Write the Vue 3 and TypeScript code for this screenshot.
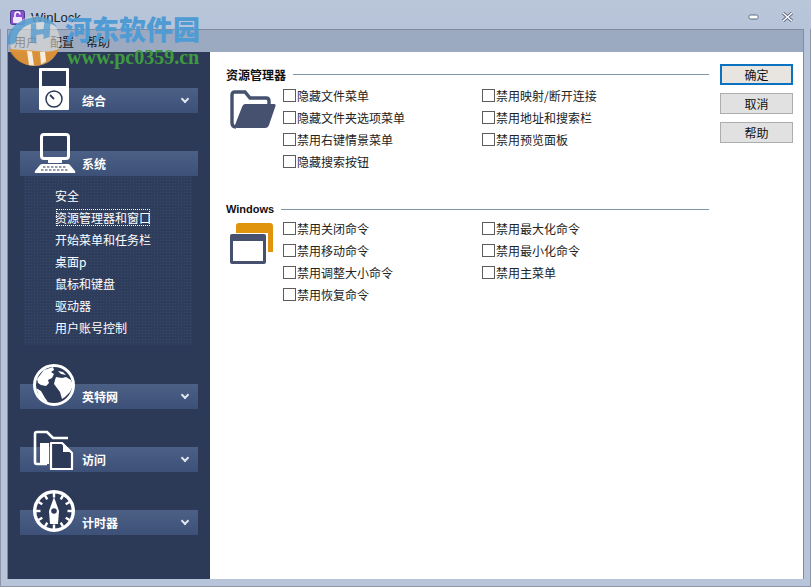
<script setup lang="ts">
interface Section { title: string; cls: string; expanded?: boolean }
const menus: string[] = ['用户', '配置', '帮助']
const sysItems: string[] = ['安全', '资源管理器和窗口', '开始菜单和任务栏', '桌面p', '鼠标和键盘', '驱动器', '用户账号控制']
const explorerA: string[] = ['隐藏文件菜单', '隐藏文件夹选项菜单', '禁用右键情景菜单', '隐藏搜索按钮']
const explorerB: string[] = ['禁用映射/断开连接', '禁用地址和搜索栏', '禁用预览面板']
const winA: string[] = ['禁用关闭命令', '禁用移动命令', '禁用调整大小命令', '禁用恢复命令']
const winB: string[] = ['禁用最大化命令', '禁用最小化命令', '禁用主菜单']
const lowerSections: Section[] = [
  { title: '英特网', cls: 'globe' },
  { title: '访问', cls: 'files' },
  { title: '计时器', cls: 'compass' },
]
const ticks: number[] = [30, 60, 90, 120, 150, 180, 210, 240, 270, 300, 330, 0]
</script>

<template>
  <div class="window">
    <header class="titlebar">
      <svg class="app-icon" width="15" height="15" viewBox="0 0 15 15">
        <rect x="0.5" y="0.5" width="14" height="14" rx="2" fill="#8b4fd0" stroke="#4a3a8a" />
        <rect x="3" y="7" width="9" height="6" rx="1" fill="#efe6fb" />
        <path d="M5 7V4.500a2.500 2.500 0 0 1 5 0" fill="none" stroke="#fff" stroke-width="1.500" />
      </svg>
      <span class="app-title">WinLock</span>
      <span class="spacer"></span>
      <svg class="win-btn" width="12" height="8" viewBox="0 0 12 8">
        <rect x="1" y="2" width="9" height="4" rx="1.500" fill="#fff" stroke="#5d6a84" />
      </svg>
      <svg class="win-btn close" width="13" height="10" viewBox="0 0 13 10">
        <path d="M2 1l9 8M11 1l-9 8" stroke="#5d6a84" stroke-width="3.200" />
        <path d="M2 1l9 8M11 1l-9 8" stroke="#fff" stroke-width="1.400" />
      </svg>
    </header>

    <div class="frame">
      <nav class="menubar">
        <span v-for="m in menus" :key="m" class="menu">{{ m }}</span>
      </nav>

      <div class="body">
        <aside class="sidebar">
          <section class="sec first">
            <svg class="sec-icon ipod" width="30" height="42" viewBox="0 0 30 42">
              <rect width="30" height="42" rx="1" fill="#fff" />
              <rect x="3" y="3" width="24" height="15" fill="#2c3a58" />
              <circle cx="15" cy="31" r="8" fill="none" stroke="#2c3a58" stroke-width="1.500" />
              <path d="M15 31l-4-4" stroke="#2c3a58" stroke-width="1.800" />
            </svg>
            <div class="banner"><span class="banner-text">综合</span><span class="chev"></span></div>
          </section>

          <section class="sec second">
            <svg class="sec-icon computer" width="42" height="41" viewBox="0 0 42 41">
              <rect x="7.500" y="1.500" width="27" height="24" rx="2.500" fill="none" stroke="#fff" stroke-width="3" />
              <rect x="14" y="27" width="14" height="3" fill="#fff" />
              <path d="M8 31h26q1 0 2 1l5 6q1 2-1 2H2q-2 0-1-2l5-6q1-1 2-1z" fill="#fff" />
              <path d="M9 34h24M7 37h28" stroke="#2c3a58" stroke-width="1.200" stroke-dasharray="2.500 1.500" />
            </svg>
            <div class="banner"><span class="banner-text">系统</span></div>
            <ul class="sublist">
              <li v-for="(it, i) in sysItems" :key="it"><span :class="{ focused: i === 1 }">{{ it }}</span></li>
            </ul>
          </section>

          <section v-for="s in lowerSections" :key="s.title" class="sec lower">
            <svg v-if="s.cls === 'globe'" class="sec-icon low-icon" width="42" height="42" viewBox="0 0 42 42">
              <circle cx="21" cy="21" r="19.500" fill="#2c3a58" stroke="#fff" stroke-width="3" />
              <path d="M4 15L11 6l9-3 1 3-3 2 3 2-2 4-4 2 1 3-3 3-5-1-3-2z" fill="#fff" />
              <path d="M23 13l6 1 4-1 5 3 2 6-3 6-5 5-3 2-2-7-3-4-3-4 1-4z" fill="#fff" />
              <path d="M25 7l5 1 3 3-5-1zM3 24l5 3 4 7 3 4-3-1-6-5z" fill="#fff" />
            </svg>
            <svg v-else-if="s.cls === 'files'" class="sec-icon low-icon files-icon" width="42" height="40" viewBox="0 0 42 40">
              <path d="M14 34H4q-2 0-2-2V4q0-2 2-2h10l6 6h15" fill="none" stroke="#fff" stroke-width="2.600" />
              <rect x="7" y="13" width="9" height="21" fill="#fff" />
              <path d="M18 13h11l10 10v16H18z" fill="#2c3a58" stroke="#fff" stroke-width="2.200" stroke-linejoin="round" />
              <path d="M30 13v9h9z" fill="#fff" />
            </svg>
            <svg v-else class="sec-icon low-icon" width="42" height="42" viewBox="0 0 42 42">
              <circle cx="21" cy="21" r="19.300" fill="#2c3a58" stroke="#fff" stroke-width="3.400" />
              <path
                v-for="t in ticks"
                :key="t"
                d="M21 3v4.500"
                stroke="#fff"
                stroke-width="2.400"
                :transform="`rotate(${t} 21 21)`"
              />
              <path d="M21 7l5 14-1 13h-8l-1-13z" fill="#fff" />
              <circle cx="21" cy="21" r="2.800" fill="#2c3a58" />
            </svg>
            <div class="banner"><span class="banner-text">{{ s.title }}</span><span class="chev"></span></div>
          </section>
        </aside>

        <main class="content">
          <div class="panel">
            <div class="group">
              <div class="group-head"><h2>资源管理器</h2><i class="rule"></i></div>
              <div class="group-body">
                <svg class="group-icon" width="46" height="40" viewBox="0 0 46 40">
                  <path d="M6 37q-4 0-4-4V5q0-3 3-3h10l5 6h16q3 0 3 3v3" fill="none" stroke="#46516f" stroke-width="3.400" />
                  <path d="M15 14h29q2 0 1.500 2L39 35q-1 3-4 3H7q-3 0-2-3l7-18q1-3 3-3z" fill="#46516f" />
                </svg>
                <div class="col">
                  <label v-for="c in explorerA" :key="c" class="check"><i class="box"></i>{{ c }}</label>
                </div>
                <div class="col">
                  <label v-for="c in explorerB" :key="c" class="check"><i class="box"></i>{{ c }}</label>
                </div>
              </div>
            </div>

            <div class="group win">
              <div class="group-head"><h2>Windows</h2><i class="rule"></i></div>
              <div class="group-body">
                <svg class="group-icon win-icon" width="43" height="43" viewBox="0 0 43 43">
                  <path d="M6 12V4q0-3 3-3h31q3 0 3 3v26h-5V11H6z" fill="#e0930c" />
                  <rect x="0" y="12" width="36" height="30" rx="2" fill="#46516f" />
                  <rect x="3" y="19" width="30" height="20" fill="#fff" />
                </svg>
                <div class="col">
                  <label v-for="c in winA" :key="c" class="check"><i class="box"></i>{{ c }}</label>
                </div>
                <div class="col">
                  <label v-for="c in winB" :key="c" class="check"><i class="box"></i>{{ c }}</label>
                </div>
              </div>
            </div>
          </div>

          <div class="actions">
            <button class="btn primary">确定</button>
            <button class="btn">取消</button>
            <button class="btn">帮助</button>
          </div>
        </main>
      </div>
    </div>

    <div class="watermark">
      <svg class="wm-logo" width="58" height="56" viewBox="0 0 58 56">
        <circle cx="30" cy="30" r="25" fill="#efe9dd" opacity=".55" />
        <path d="M4 38a27 27 0 0 0 50 0c-8 3-14 3-22 2s-18-1-28-2z" fill="#e08f2c" opacity=".9" />
        <path d="M22 40l5 .5 2 14-5-.5zM35 41l5-.5 1 10-5 3z" fill="#f4eee2" />
        <path d="M3 33C1 20 12 8 30 6c10-1 17 3 22 10-8-5-16-6-22-4-12 2-19 10-19 19-3 3-6 3-8 2z" fill="#3d92cf" opacity=".7" />
        <path d="M26 13l5-1 .5 7 7-1 1-8 6 2-1 14-6 2v-5l-7 1-1 7-5 1z" fill="#3d92cf" opacity=".65" />
      </svg>
      <span class="wm-cn">河东软件园</span>
      <span class="wm-url">www.pc0359.cn</span>
    </div>
  </div>
</template>

<style scoped>
.window {
  position: relative;
  width: 811px;
  height: 587px;
  box-sizing: border-box;
  overflow: hidden;
  display: flex;
  flex-direction: column;
  background: #b7c4d9;
  box-shadow: inset 0 0 0 1px #8d97a8;
  font-family: "Noto Sans CJK SC", "Liberation Sans", sans-serif;
  font-size: 12px;
  color: #111;
}
.titlebar {
  height: 29px;
  box-sizing: border-box;
  flex: none;
  display: flex;
  align-items: center;
  padding: 5px 17px 0 10px;
  background: linear-gradient(#bac7db, #b6c3d8);
}
.app-icon { margin-right: 6px; }
.app-title { font-family: "Liberation Sans", sans-serif; font-size: 13px; color: #1c1c1c; }
.spacer { flex: 1; }
.win-btn { margin-left: 21px; }
.frame {
  flex: 1;
  margin: 0 7px 8px;
  display: flex;
  flex-direction: column;
  border: solid #7f8ba3;
  border-width: 1px 1px 0 1px;
  min-height: 0;
}
.menubar {
  height: 22px;
  flex: none;
  display: flex;
  gap: 12px;
  align-items: center;
  padding-left: 6px;
  background: #9ba9c1;
}
.menu { width: 24px; color: #151515; }
.body { flex: 1; display: flex; min-height: 0; }
.sidebar {
  width: 202px;
  flex: none;
  box-sizing: border-box;
  padding: 36px 12px 0;
  background: #2c3a58;
}
.sec { position: relative; }
.second { margin-top: 38px; }
.lower { margin-top: 38px; }
.second + .lower { margin-top: 39px; }
.banner {
  height: 25px;
  width: 178px;
  display: flex;
  align-items: center;
  padding-left: 62px;
  box-sizing: border-box;
  background: linear-gradient(#4c5f85, #3d5077);
  color: #fff;
  font-weight: 700;
  font-size: 12px;
  position: relative;
}
.banner-text { flex: 1; }
.chev {
  position: absolute;
  right: 10px;
  top: 8px;
  width: 4px;
  height: 4px;
  border: solid #dfe5ef;
  border-width: 0 2px 2px 0;
  transform: rotate(45deg);
}
.sec-icon { position: absolute; z-index: 1; display: block; }
.ipod { left: 19px; top: -20px; }
.computer { left: 14px; top: -18px; }
.low-icon { left: 13px; top: -20px; }
.files-icon { top: -17px; }
.sublist {
  list-style: none;
  margin: 0 0 0 4px;
  padding: 9px 0 6px 31px;
  width: 168px;
  box-sizing: border-box;
  height: 169px;
  color: #fff;
  background-color: #2f3d5c;
  background-image: radial-gradient(#3a4869 0.7px, transparent 0.8px);
  background-size: 3px 3px;
}
.sublist li { height: 22px; line-height: 22px; white-space: nowrap; }
.focused { outline: 1px dotted #fff; outline-offset: -2px; padding: 1px 0; }
.content {
  flex: 1;
  display: flex;
  background: #fff;
  padding: 12px 10px 0 16px;
}
.panel { width: 483px; flex: none; padding-top: 2px; }
.group-head { display: flex; align-items: center; gap: 7px; height: 16px; }
.group-head h2 { margin: 0; font-size: 12px; font-weight: 700; color: #111; white-space: nowrap; }
.win .group-head h2 { font-family: "Liberation Sans", sans-serif; font-size: 11px; }
.rule { flex: 1; height: 1px; background: #7f95a8; }
.group-body { display: flex; margin-top: 2px; position: relative; padding-left: 57px; }
.group-icon { position: absolute; left: 4px; top: 6px; }
.win-icon { left: 4px; top: 5px; }
.win { margin-top: 29px; }
.win .group-body { margin-top: 0; }
.col { width: 199px; display: flex; flex-direction: column; }
.check { height: 22px; display: flex; align-items: center; white-space: nowrap; color: #222; }
.box {
  width: 11px;
  height: 11px;
  flex: none;
  margin-right: 1px;
  border: 1px solid #5c5c5c;
  background: #fff;
}
.actions { margin-left: 11px; display: flex; flex-direction: column; gap: 8px; }
.btn {
  width: 73px;
  height: 21px;
  padding: 0;
  border: 1px solid #adadad;
  background: #e1e1e1;
  font: inherit;
  color: #111;
}
.primary { border: 2px solid #0a72c0; background: #e8e4e0; }
.watermark {
  position: absolute;
  left: 5px;
  top: 11px;
  width: 205px;
  height: 60px;
  pointer-events: none;
}
.wm-logo { position: absolute; left: 0; top: 0; }
.wm-cn {
  position: absolute;
  left: 60px;
  top: 0;
  font-family: "Noto Sans CJK SC", sans-serif;
  font-size: 27px;
  line-height: 36px;
  font-weight: 900;
  color: #4f9bd4;
  white-space: nowrap;
}
.wm-url {
  position: absolute;
  left: 62px;
  top: 35px;
  font-family: "Liberation Serif", serif;
  font-size: 20px;
  line-height: 22px;
  font-weight: 700;
  color: #3f9a3f;
  white-space: nowrap;
}
</style>

<style>
html, body { margin: 0; padding: 0; background: #b7c4d9; }
</style>
